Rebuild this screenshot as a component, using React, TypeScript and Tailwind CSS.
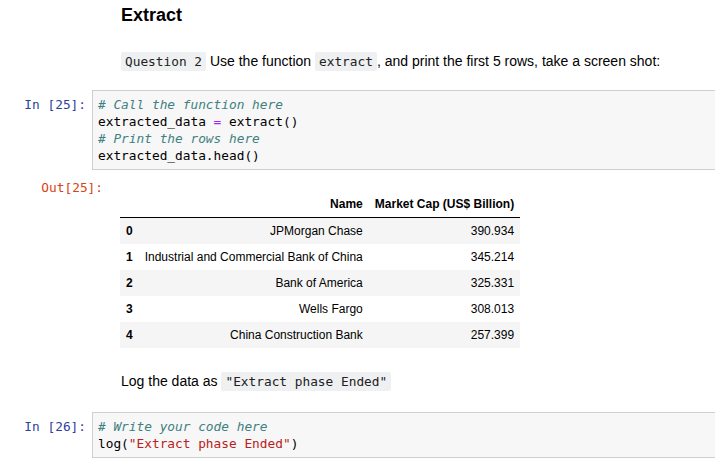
import React from "react";

const mono = { fontFamily: '"DejaVu Sans Mono", "Liberation Mono", monospace' };

const rows: [string, string, string][] = [
  ["0", "JPMorgan Chase", "390.934"],
  ["1", "Industrial and Commercial Bank of China", "345.214"],
  ["2", "Bank of America", "325.331"],
  ["3", "Wells Fargo", "308.013"],
  ["4", "China Construction Bank", "257.399"],
];

function Code({ children }: { children: React.ReactNode }) {
  return (
    <span
      className="bg-[#eff0f1] rounded-[2px] px-[4px] py-[2px] text-[12.8px] text-[#222]"
      style={mono}
    >
      {children}
    </span>
  );
}

export default function App() {
  return (
    <div
      className="w-[715px] h-[469px] overflow-hidden bg-white text-black"
      style={{ fontFamily: '"Liberation Sans", Arial, sans-serif' }}
    >
      <h3 className="pl-[121px] pt-[4px] text-[18px] font-bold leading-[22px]">Extract</h3>

      <p className="pl-[121px] mt-[25px] text-[14px] leading-[20px]">
        <Code>Question 2</Code> Use the function <Code>extract</Code>, and print the first 5 rows, take a screen shot:
      </p>

      <div className="flex mt-[18px] text-[12.8px] leading-[17px]" style={mono}>
        <div className="w-[86px] shrink-0 text-right pt-[6px] text-[#303f9f]">In&nbsp;[25]:</div>
        <div className="ml-[6px] w-[640px] shrink-0 border border-[#cfcfcf] bg-[#f7f7f7] px-[5px] py-[5px] whitespace-pre">
          <div className="italic text-[#408080]"># Call the function here</div>
          <div>
            extracted_data <span className="text-[#aa22ff]">=</span> extract()
          </div>
          <div className="italic text-[#408080]"># Print the rows here</div>
          <div>extracted_data.head()</div>
        </div>
      </div>

      <div className="flex items-start mt-[9px]">
        <div
          className="w-[103px] shrink-0 text-right text-[12.8px] leading-[17px] text-[#d84315]"
          style={mono}
        >
          Out[25]:
        </div>
        <table className="ml-[17px] mt-[12px] border-collapse text-[12px] leading-[14px]">
          <thead>
            <tr className="border-b border-black">
              <th className="p-[6px]"></th>
              <th className="p-[6px] text-right font-bold">Name</th>
              <th className="p-[6px] text-right font-bold">Market Cap (US$ Billion)</th>
            </tr>
          </thead>
          <tbody>
            {rows.map((r, i) => (
              <tr key={r[0]} className={i % 2 === 0 ? "bg-[#f5f5f5]" : "bg-white"}>
                <th className="p-[6px] text-left font-bold">{r[0]}</th>
                <td className="p-[6px] text-right whitespace-nowrap">{r[1]}</td>
                <td className="p-[6px] text-right">{r[2]}</td>
              </tr>
            ))}
          </tbody>
        </table>
      </div>

      <p className="pl-[121px] mt-[23px] text-[14px] leading-[20px]">
        Log the data as <Code>"Extract phase Ended"</Code>
      </p>

      <div className="flex mt-[20px] text-[12.8px] leading-[17px]" style={mono}>
        <div className="w-[86px] shrink-0 text-right pt-[6px] text-[#303f9f]">In&nbsp;[26]:</div>
        <div className="ml-[6px] w-[640px] shrink-0 border border-[#cfcfcf] bg-[#f7f7f7] px-[5px] py-[5px] whitespace-pre">
          <div className="italic text-[#408080]"># Write your code here</div>
          <div>
            log(<span className="text-[#ba2121]">"Extract phase Ended"</span>)
          </div>
        </div>
      </div>
    </div>
  );
}
